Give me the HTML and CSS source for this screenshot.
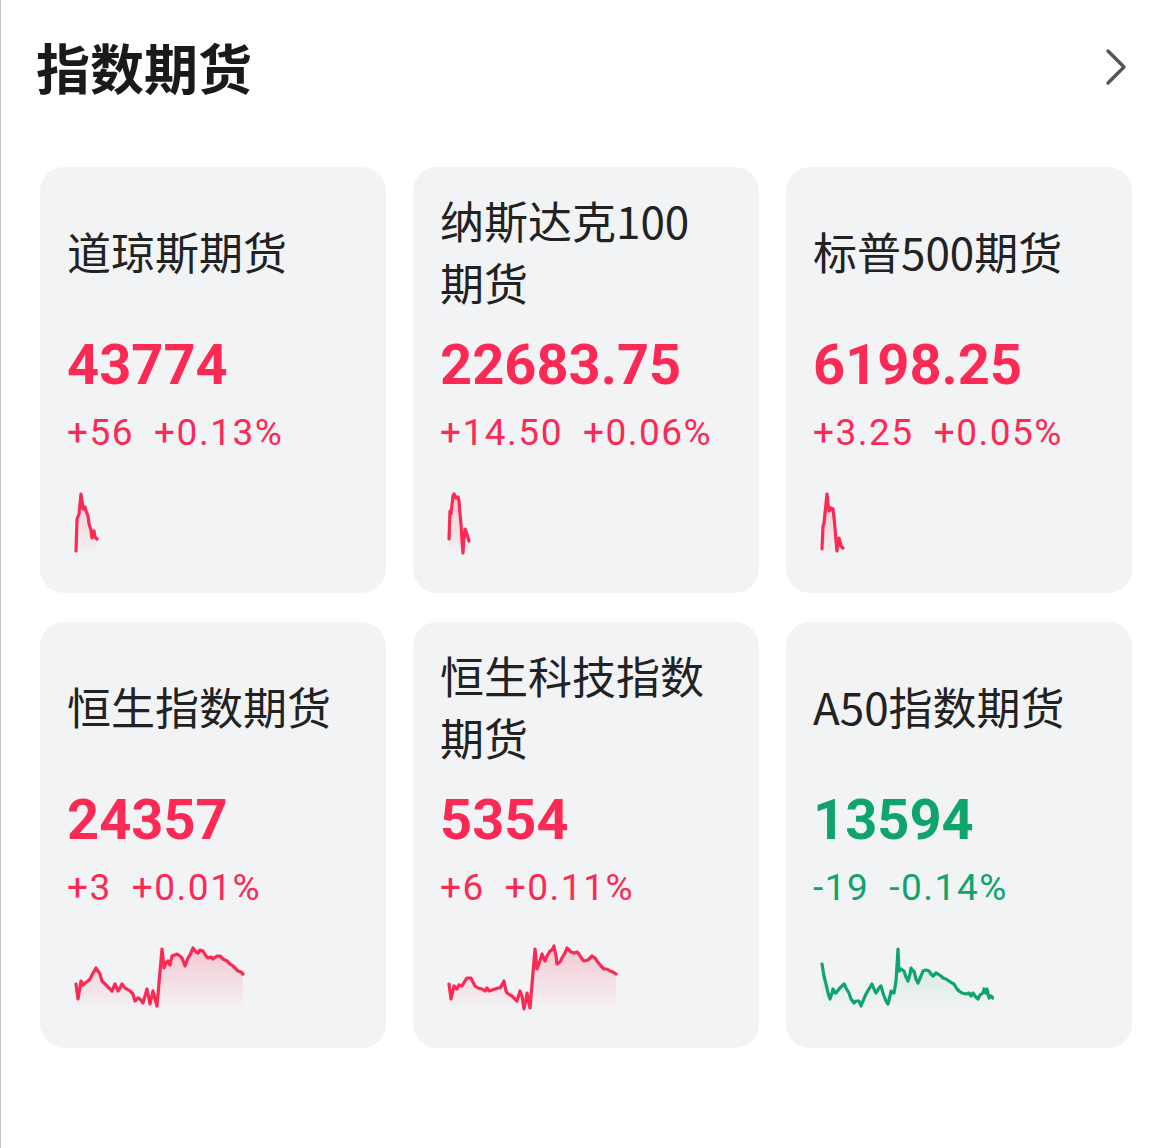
FILE: index.html
```html
<!DOCTYPE html>
<html lang="zh">
<head>
<meta charset="utf-8">
<title>指数期货</title>
<link rel="stylesheet" href="styles.css">
</head>
<body>
<div class="page">
  <header class="header">
    <h1 class="title">指数期货</h1>
    <svg class="chev" width="26" height="40" viewBox="0 0 26 40"><path d="M5 4 L21 20 L5 36" fill="none" stroke="#555" stroke-width="3.4" stroke-linecap="round" stroke-linejoin="round"/></svg>
  </header>
  <main class="grid">
    <section class="card up">
      <div class="name"><span>道琼斯期货</span></div>
      <div class="price">43774</div>
      <div class="change"><span>+56</span><span>+0.13%</span></div>
      <svg class="spark" viewBox="0 0 176 70" width="176" height="70">
        <defs><linearGradient id="gr1" x1="0" y1="0" x2="0" y2="1"><stop offset="0" stop-color="#ff2d55" stop-opacity="0.22"/><stop offset="1" stop-color="#ff2d55" stop-opacity="0"/></linearGradient></defs>
        <path class="area" fill="url(#gr1)" d="M4 65 L5 33 L7 28 L9 8 L10 15 L11 23 L13 21 L14 25 L16 30 L17 38 L19 44 L20 52 L21 47 L22 45 L23 51 L25 53 L25 70 L4 70 Z"/>
        <polyline class="line" points="4,65 5,33 7,28 9,8 10,15 11,23 13,21 14,25 16,30 17,38 19,44 20,52 21,47 22,45 23,51 25,53"/>
      </svg>
    </section>
    <section class="card up">
      <div class="name"><span>纳斯达克100期货</span></div>
      <div class="price">22683.75</div>
      <div class="change"><span>+14.50</span><span>+0.06%</span></div>
      <svg class="spark" viewBox="0 0 176 70" width="176" height="70">
        <defs><linearGradient id="gr2" x1="0" y1="0" x2="0" y2="1"><stop offset="0" stop-color="#ff2d55" stop-opacity="0.22"/><stop offset="1" stop-color="#ff2d55" stop-opacity="0"/></linearGradient></defs>
        <path class="area" fill="url(#gr2)" d="M4 53 L5 25 L6 28 L8 10 L9 8 L11 12 L13 11 L14 15 L15 28 L16 38 L17 55 L18 67 L19 52 L20 43 L22 48 L24 55 L24 70 L4 70 Z"/>
        <polyline class="line" points="4,53 5,25 6,28 8,10 9,8 11,12 13,11 14,15 15,28 16,38 17,55 18,67 19,52 20,43 22,48 24,55"/>
      </svg>
    </section>
    <section class="card up">
      <div class="name"><span>标普500期货</span></div>
      <div class="price">6198.25</div>
      <div class="change"><span>+3.25</span><span>+0.05%</span></div>
      <svg class="spark" viewBox="0 0 176 70" width="176" height="70">
        <defs><linearGradient id="gr3" x1="0" y1="0" x2="0" y2="1"><stop offset="0" stop-color="#ff2d55" stop-opacity="0.22"/><stop offset="1" stop-color="#ff2d55" stop-opacity="0"/></linearGradient></defs>
        <path class="area" fill="url(#gr3)" d="M4 63 L5 40 L6 37 L9 8 L10 18 L11 25 L13 22 L15 23 L16 32 L17 42 L18 55 L19 65 L20 58 L21 52 L23 60 L25 62 L25 70 L4 70 Z"/>
        <polyline class="line" points="4,63 5,40 6,37 9,8 10,18 11,25 13,22 15,23 16,32 17,42 18,55 19,65 20,58 21,52 23,60 25,62"/>
      </svg>
    </section>
    <section class="card up">
      <div class="name"><span>恒生指数期货</span></div>
      <div class="price">24357</div>
      <div class="change"><span>+3</span><span>+0.01%</span></div>
      <svg class="spark" viewBox="0 0 176 70" width="176" height="70">
        <defs><linearGradient id="gr4" x1="0" y1="0" x2="0" y2="1"><stop offset="0" stop-color="#ff2d55" stop-opacity="0.22"/><stop offset="1" stop-color="#ff2d55" stop-opacity="0"/></linearGradient></defs>
        <path class="area" fill="url(#gr4)" d="M4 43 L6 58 L9 40 L11 44 L13 42 L16 40 L18 38 L21 32 L24 27 L26 30 L28 33 L30 40 L33 43 L35 45 L38 48 L40 50 L43 43 L46 50 L48 47 L50 43 L53 47 L55 48 L58 50 L61 53 L63 60 L66 57 L68 58 L71 62 L73 55 L75 48 L78 63 L81 50 L83 58 L85 65 L90 8 L92 27 L94 22 L96 20 L98 24 L100 15 L103 14 L105 13 L108 15 L110 17 L113 25 L116 17 L118 14 L121 7 L124 11 L126 12 L128 9 L131 10 L134 15 L136 17 L139 16 L141 18 L145 15 L148 15 L151 18 L155 20 L158 23 L161 25 L164 28 L166 30 L169 31 L171 33 L171 70 L4 70 Z"/>
        <polyline class="line" points="4,43 6,58 9,40 11,44 13,42 16,40 18,38 21,32 24,27 26,30 28,33 30,40 33,43 35,45 38,48 40,50 43,43 46,50 48,47 50,43 53,47 55,48 58,50 61,53 63,60 66,57 68,58 71,62 73,55 75,48 78,63 81,50 83,58 85,65 90,8 92,27 94,22 96,20 98,24 100,15 103,14 105,13 108,15 110,17 113,25 116,17 118,14 121,7 124,11 126,12 128,9 131,10 134,15 136,17 139,16 141,18 145,15 148,15 151,18 155,20 158,23 161,25 164,28 166,30 169,31 171,33"/>
      </svg>
    </section>
    <section class="card up">
      <div class="name"><span>恒生科技指数期货</span></div>
      <div class="price">5354</div>
      <div class="change"><span>+6</span><span>+0.11%</span></div>
      <svg class="spark" viewBox="0 0 176 70" width="176" height="70">
        <defs><linearGradient id="gr5" x1="0" y1="0" x2="0" y2="1"><stop offset="0" stop-color="#ff2d55" stop-opacity="0.22"/><stop offset="1" stop-color="#ff2d55" stop-opacity="0"/></linearGradient></defs>
        <path class="area" fill="url(#gr5)" d="M4 43 L6 58 L9 45 L12 48 L14 44 L17 45 L20 40 L22 37 L26 37 L28 41 L30 45 L33 47 L37 48 L40 50 L42 47 L44 50 L47 49 L50 48 L53 47 L55 47 L57 44 L59 40 L61 50 L62 52 L65 54 L67 55 L70 58 L72 60 L75 50 L77 55 L79 68 L81 58 L82 52 L84 62 L85 67 L90 8 L92 28 L95 20 L97 13 L100 20 L102 15 L105 10 L107 9 L109 5 L111 15 L112 23 L115 21 L117 17 L120 12 L122 7 L126 11 L129 12 L132 11 L134 13 L137 18 L139 20 L143 19 L147 15 L150 17 L152 20 L156 25 L159 28 L162 28 L165 30 L168 31 L171 33 L171 70 L4 70 Z"/>
        <polyline class="line" points="4,43 6,58 9,45 12,48 14,44 17,45 20,40 22,37 26,37 28,41 30,45 33,47 37,48 40,50 42,47 44,50 47,49 50,48 53,47 55,47 57,44 59,40 61,50 62,52 65,54 67,55 70,58 72,60 75,50 77,55 79,68 81,58 82,52 84,62 85,67 90,8 92,28 95,20 97,13 100,20 102,15 105,10 107,9 109,5 111,15 112,23 115,21 117,17 120,12 122,7 126,11 129,12 132,11 134,13 137,18 139,20 143,19 147,15 150,17 152,20 156,25 159,28 162,28 165,30 168,31 171,33"/>
      </svg>
    </section>
    <section class="card down">
      <div class="name"><span>A50指数期货</span></div>
      <div class="price">13594</div>
      <div class="change"><span>-19</span><span>-0.14%</span></div>
      <svg class="spark" viewBox="0 0 176 70" width="176" height="70">
        <defs><linearGradient id="gr6" x1="0" y1="0" x2="0" y2="1"><stop offset="0" stop-color="#0aa56b" stop-opacity="0.16"/><stop offset="1" stop-color="#0aa56b" stop-opacity="0"/></linearGradient></defs>
        <path class="area" fill="url(#gr6)" d="M4 23 L6 35 L8 43 L10 52 L12 58 L14 52 L15 48 L17 52 L18 52 L21 48 L23 46 L26 43 L28 47 L31 52 L33 58 L36 62 L38 60 L41 60 L43 65 L45 60 L48 53 L51 48 L54 43 L56 48 L58 52 L61 47 L63 45 L65 52 L66 55 L68 60 L70 63 L72 55 L73 50 L75 52 L76 52 L78 40 L80 8 L81 30 L83 28 L86 30 L88 36 L90 40 L92 33 L93 27 L95 30 L96 30 L98 38 L100 42 L103 35 L105 30 L108 29 L111 30 L113 33 L115 35 L118 32 L120 33 L123 35 L125 37 L128 38 L131 40 L134 42 L136 43 L139 48 L141 50 L144 52 L148 53 L151 52 L153 55 L155 52 L157 55 L160 58 L162 54 L165 52 L166 48 L168 52 L169 48 L171 57 L173 55 L175 57 L175 70 L4 70 Z"/>
        <polyline class="line" points="4,23 6,35 8,43 10,52 12,58 14,52 15,48 17,52 18,52 21,48 23,46 26,43 28,47 31,52 33,58 36,62 38,60 41,60 43,65 45,60 48,53 51,48 54,43 56,48 58,52 61,47 63,45 65,52 66,55 68,60 70,63 72,55 73,50 75,52 76,52 78,40 80,8 81,30 83,28 86,30 88,36 90,40 92,33 93,27 95,30 96,30 98,38 100,42 103,35 105,30 108,29 111,30 113,33 115,35 118,32 120,33 123,35 125,37 128,38 131,40 134,42 136,43 139,48 141,50 144,52 148,53 151,52 153,55 155,52 157,55 160,58 162,54 165,52 166,48 168,52 169,48 171,57 173,55 175,57"/>
      </svg>
    </section>
  </main>
</div>
</body>
</html>
```

FILE: styles.css
```css
html, body {
  margin: 0;
  padding: 0;
  background: #ffffff;
}
body {
  font-family: "Noto Sans CJK SC", "Noto Sans", sans-serif;
  color: #1f1f1f;
}
.page {
  width: 1160px;
  min-height: 1148px;
  box-sizing: border-box;
  border-left: 1px solid #c4c4c4;
}
.header {
  height: 134px;
  display: flex;
  align-items: center;
  justify-content: space-between;
  padding: 0 31px 0 35px;
}
.title {
  margin: 0;
  font-size: 54px;
  font-weight: 700;
  line-height: 1;
  color: #1a1a1a;
}
.chev {
  display: block;
}
.grid {
  margin-top: 33px;
  padding-left: 39px;
  display: grid;
  grid-template-columns: repeat(3, 346px);
  grid-auto-rows: 426px;
  column-gap: 27px;
  row-gap: 29px;
}
.card {
  background: #f2f3f5;
  border-radius: 24px;
  padding: 22px 26px 0 27px;
  box-sizing: border-box;
  display: flex;
  flex-direction: column;
}
.name {
  height: 124px;
  display: flex;
  align-items: center;
  font-size: 44px;
  line-height: 62px;
  color: #222;
}
.price {
  margin-top: 16px;
  font-family: Roboto, "Liberation Sans", sans-serif;
  font-weight: 700;
  font-size: 56px;
  line-height: 72px;
}
.change {
  margin-top: 7px;
  font-family: Roboto, "Liberation Sans", sans-serif;
  font-weight: 400;
  font-size: 37px;
  line-height: 50px;
  letter-spacing: 1.5px;
  display: flex;
  gap: 20px;
}
.up .price, .up .change { color: #fb2a55; }
.down .price, .down .change { color: #0ea46c; }
.spark {
  display: block;
  margin-top: 28px;
  margin-left: 5px;
}
.spark .line {
  fill: none;
  stroke-width: 3.2;
  stroke-linejoin: round;
  stroke-linecap: round;
}
.up .spark .line { stroke: #fb2a55; }
.down .spark .line { stroke: #0ea46c; }
```
